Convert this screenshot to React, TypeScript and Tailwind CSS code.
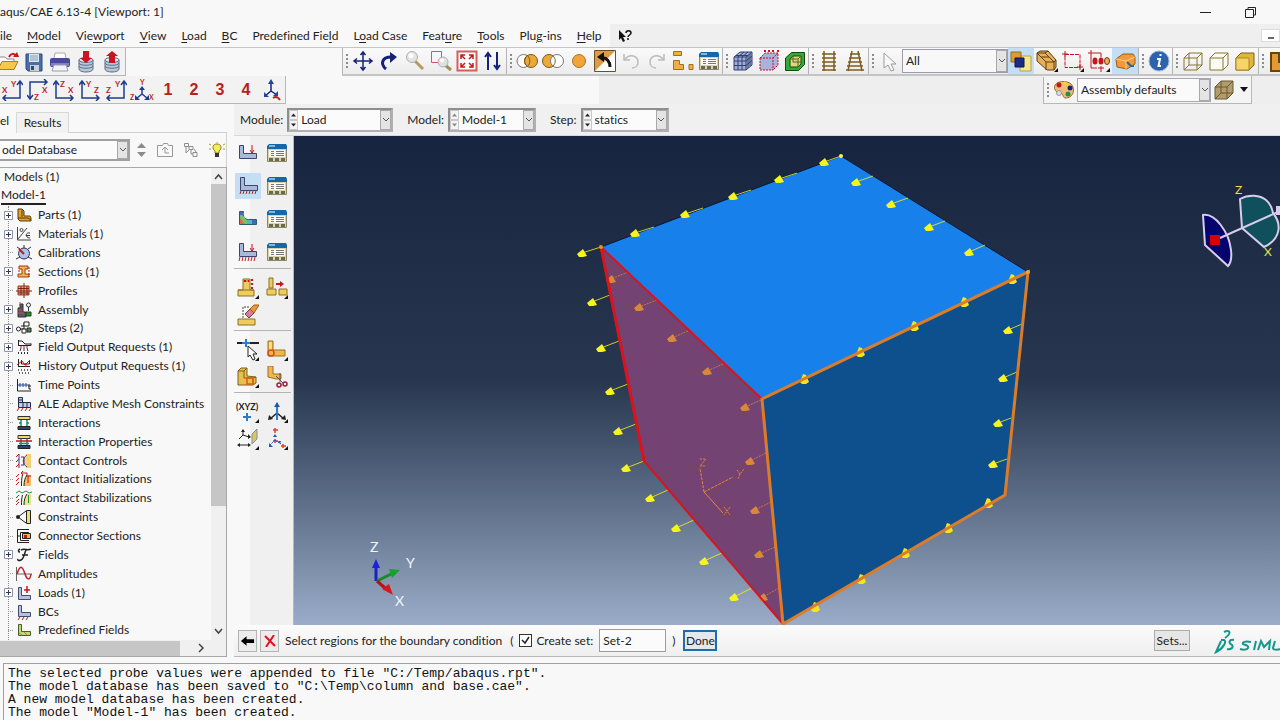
import React, { useState } from "react";

type IconMap = Record<string, React.ReactNode>;

const NAVY = "#14227a";
const RED = "#c4161c";

// every toolbar glyph lives on a 22x22 grid
const toolIcons: IconMap = {
    open: (
        <>
            <path d="M2 18V6h6l2 2h7v3" fill="#fff" stroke="#8a8a8a" />
            <path d="M1 18.500 5 10.500h16l-4 8z" fill="#f4c84c" stroke="#a8801c" />
            <path d="M12 6c2-4 5-4 7-1" fill="none" stroke={RED} strokeWidth="2" />
            <path d="M16 6h6l-2-5z" fill={RED} />
        </>
    ),
    save: (
        <>
            <path d="M3 3h16v17H5l-2-2z" fill="#4a6fa8" stroke="#2c4a7c" />
            <path d="M6 3h10v8H6z" fill="#dce6ee" />
            <path d="M7 5h8M7 7h8M7 9h8" stroke="#8ba0b4" />
            <path d="M7 14h9v6H7z" fill="#c8d0d8" />
            <path d="M8 15h3v4H8z" fill="#2c4a7c" />
        </>
    ),
    print: (
        <>
            <path d="M6 2h10l1 6H5z" fill="#fff" stroke="#aaa" />
            <rect x="1" y="7" width="20" height="9" rx="2" fill="#4a4a9c" />
            <path d="M2 12h18v3H2z" fill="#7f80c0" />
            <path d="M5 14h12l2 6H3z" fill="#f4f4f8" stroke="#9a9ab0" />
        </>
    ),
    dbIn: (
        <>
            <path d="M4 9v9c0 4 14 4 14 0V9" fill="#b8c8d8" stroke="#5a7088" />
            <ellipse cx="11" cy="9" rx="7" ry="2.500" fill="#dfe8f0" stroke="#5a7088" />
            <path d="M4 12c0 3 14 3 14 0M4 15c0 3 14 3 14 0" fill="none" stroke="#5a7088" />
            <path d="M8 0h6v7h3l-6 5-6-5h3z" fill="#cc1420" />
        </>
    ),
    dbOut: (
        <>
            <path d="M4 9v9c0 4 14 4 14 0V9" fill="#b8c8d8" stroke="#5a7088" />
            <ellipse cx="11" cy="9" rx="7" ry="2.500" fill="#dfe8f0" stroke="#5a7088" />
            <path d="M4 12c0 3 14 3 14 0M4 15c0 3 14 3 14 0" fill="none" stroke="#5a7088" />
            <path d="M8 12h6V5h3l-6-5-6 5h3z" fill="#cc1420" />
        </>
    ),
    pan: (
        <path
            d="M11 2v18M2 11h18M8.500 5 11 2l2.500 3M8.500 17l2.500 3 2.500-3M5 8.500 2 11l3 2.500M17 8.500l3 2.500-3 2.500"
            fill="none"
            stroke={NAVY}
            strokeWidth="1.500"
        />
    ),
    rotate: (
        <>
            <path d="M8 19C2 14 4 7 13 7" fill="none" stroke={NAVY} strokeWidth="3" />
            <path d="M12 2l7 5-7 6z" fill={NAVY} />
        </>
    ),
    magnify: (
        <>
            <path d="M11 11l8 8" stroke="#b49a5c" strokeWidth="3" />
            <circle cx="8" cy="7" r="5.500" fill="#e4e4e4" stroke="#b0b0b0" />
            <circle cx="7" cy="5.500" r="2.500" fill="#fff" />
        </>
    ),
    boxZoom: (
        <>
            <path d="M1.500 1.500h10v11h-10z" fill="none" stroke="#cc5a5a" />
            <path d="M15 15l6 5" stroke="#a58d55" strokeWidth="3" />
            <circle cx="13" cy="12" r="5" fill="#e0e0e0" stroke="#b0b0b0" />
            <circle cx="12" cy="10.500" r="2" fill="#fff" />
        </>
    ),
    fit: (
        <>
            <path d="M1.500 1.500h19v19h-19z" fill="#fff" stroke="#d06058" strokeWidth="2" />
            <path
                d="M9 9 5 5m0 4V5h4M13 9l4-4m-4 0h4v4M9 13l-4 4m0-4v4h4M13 13l4 4m0-4v4h-4"
                fill="none"
                stroke={RED}
                strokeWidth="1.500"
            />
        </>
    ),
    cycle: (
        <path d="M6 20V4M3 7l3-4 3 4M15 2v16M12 15l3 4 3-4" fill="none" stroke={NAVY} strokeWidth="2" />
    ),
    union: (
        <>
            <circle cx="7.500" cy="11" r="6.500" fill="#fff" stroke="#777" />
            <circle cx="15" cy="11" r="6.500" fill="#eda83a" stroke="#7a5818" />
            <path d="M11.500 5.500c-4 3-4 8 0 11" fill="none" stroke="#7a5818" />
            <path d="M11.500 5.500c3 3 3 8 0 11" fill="none" stroke="#7a5818" />
        </>
    ),
    subtract: (
        <>
            <circle cx="7" cy="11" r="6.500" fill="#eda83a" stroke="#7a5818" />
            <circle cx="15" cy="11" r="6.500" fill="#fff" stroke="#777" />
            <path d="M11 6c3 3 3 7 0 10" fill="none" stroke="#7a5818" />
        </>
    ),
    circle: <circle cx="11" cy="11" r="6.500" fill="#f0a53a" stroke="#a87424" />,
    pickBack: (
        <>
            <path d="M.500.500h21v21H.500z" fill="#fff" stroke="#6a5024" />
            <path d="M1 1h20L1 21z" fill="#de9a44" />
            <path d="M7 8c6-1 9 4 9 9" fill="none" stroke="#111" strokeWidth="3" />
            <path d="M3 7l7-5v10z" fill="#111" />
        </>
    ),
    undo: (
        <path d="M4 4v6h6M5 9c5-6 13-3 13 3 0 3-2 6-6 6" fill="none" stroke="#bcbcbc" strokeWidth="1.500" />
    ),
    redo: (
        <path d="M18 4v6h-6M17 9C12 3 4 6 4 12c0 3 2 6 6 6" fill="none" stroke="#bcbcbc" strokeWidth="1.500" />
    ),
    replace: (
        <path
            d="M1.500 1.500h8v4h-8zM1.500 10.500h6v4h4v5h-10zM17 14.500h4v5h-4z"
            fill="#eeb040"
            stroke="#a07020"
        />
    ),
    manager: (
        <>
            <path d="M1.500 4.500h19v15h-19z" fill="#d8d4a8" stroke="#8a8666" />
            <path d="M1 5V4l2-2h17l1 2v3H1z" fill="#1467a8" />
            <path d="M3 4h6" stroke="#fff" strokeWidth="1" />
            <path d="M3 8h16v7H3z" fill="#fbfbf4" />
            <path d="M5 9.500h3M5 11.500h3M5 13.500h3M10 9.500h8M10 11.500h8M10 13.500h8" stroke="#77777c" />
            <path d="M3 16h4v3H3zM9 16h4v3H9zM15 16h4v3h-4z" fill="#6a6a50" />
        </>
    ),
    mesh: (
        <>
            <path d="M2 7l6-5h12v13l-6 5H2z" fill="#9cadd8" stroke="#33416c" />
            <path
                d="M2 7h12v13M14 7l6-5M6 7v13M10 7v13M2 11h12l6-5M2 15.500h12l6-5M6 7l6-5M10 7l6-5M16 5v13M18 4v12M4 5.500h12"
                fill="none"
                stroke="#33416c"
            />
        </>
    ),
    seed: (
        <>
            <path d="M2 8l5-5h13v12l-5 5H2z" fill="#a8b2dc" />
            <path d="M2 8h13v12H2zM2 8l5-5h13v12l-5 5M15 8l5-5" fill="none" stroke={RED} strokeDasharray="2 1" />
            <path d="M7 2V0M11 2V0M15 2V0M20 2V0" stroke={RED} strokeWidth="2" />
        </>
    ),
    shell: (
        <>
            <path d="M1.500 8l6-5.500h13v12l-6 6h-13z" fill="#35a836" stroke="#134a14" />
            <path d="M6 9l3-3h8v8l-3 3H6z" fill="#dcd67c" stroke="#134a14" />
            <path d="M6 9h8v8M14 9l3-3M9 6v6M9 12h8" fill="none" stroke="#5c6420" />
        </>
    ),
    ladder: (
        <path d="M6 1v20M16 1v20M4 4h14M4 8h14M4 12h14M4 16h14M4 20h14" stroke="#7d5e22" strokeWidth="1.500" />
    ),
    ladderPersp: (
        <path d="M8 1 4 21M14 1l4 20M6 4h10M5 8h12M4 12h14M3 16h16M2 20h18" stroke="#7d5e22" strokeWidth="1.500" />
    ),
    cursor: <path d="M6 3v15l4-3 3 6 3-1-3-6h5z" fill="#f8f8f8" stroke="#9a9a9a" />,
    layers: (
        <>
            <path d="M10 6h11v15H10z" fill="#f6e68c" stroke="#b8a24c" />
            <path d="M1 2h10v10H1z" fill="#dc9c30" stroke="#9c6a14" />
            <path d="M5 8h9v9H5z" fill="#1c2c84" stroke="#0c1450" />
        </>
    ),
    stack: (
        <>
            <path d="M1 3l3-2h8l8 9v7l-2 3h-7L1 11z" fill="#e9ae58" stroke="#5a4014" />
            <path d="M1 3h8l9 9v8M9 3l3-2M18 12l2-2M10 12h8M10 12v8M1 3l9 9M5 7h8" fill="none" stroke="#5a4014" />
            <path d="M22 18v4h-4z" fill="#111" />
        </>
    ),
    dragBox: (
        <>
            <path d="M3 4.500h15v13H3z" fill="none" stroke={RED} strokeDasharray="4 1" />
            <path d="M0 4h6M3 1v6M15 17h6M18 14v6" stroke={RED} />
            <path d="M22 18v4h-4z" fill="#111" />
        </>
    ),
    dragPick: (
        <>
            <path d="M0 3h6M3 0v6M6 3h7M13 3v4M3 6v12h6M13 16v6M10 18h6" fill="none" stroke={RED} />
            <ellipse cx="7" cy="11" rx="2.500" ry="3.500" fill={RED} />
            <ellipse cx="13" cy="11" rx="2.500" ry="3.500" fill={RED} />
            <ellipse cx="19" cy="11" rx="2.500" ry="3.500" fill="#e8b050" stroke="#7a3010" />
            <path d="M22 18v4h-4z" fill="#111" />
        </>
    ),
    solidPick: (
        <>
            <path d="M2 9l7-5h10l2 3v7l-8 5-10-2z" fill="#f29a38" stroke="#a35a10" />
            <path d="M2 9l10 2 9-4M12 11v8" fill="none" stroke="#fbd294" />
            <path d="M13 12l4 4h3" fill="none" stroke="#2c64a0" strokeWidth="2" />
        </>
    ),
    info: (
        <>
            <circle cx="11" cy="11" r="10" fill="#2e62ab" stroke="#9ab4d8" />
            <path d="M11.500 5h2M9 9h3l-1.500 7H13" fill="none" stroke="#fff" strokeWidth="2" />
        </>
    ),
    wire: (
        <path
            d="M2 8h13v12H2zM7 3h13v12H7zM2 8l5-5M15 8l5-5M15 20l5-5M2 20l5-5"
            fill="none"
            stroke="#8c7428"
        />
    ),
    hidden: <path d="M2 8h13v12H2zM2 8l5-5h13v12l-5 5M15 8l5-5" fill="#fbfbf6" stroke="#8c7428" />,
    shaded: (
        <>
            <path d="M2 8l5-5h13v12l-5 5H2z" fill="#e0b63c" stroke="#7c6014" />
            <path d="M2 8h13v12H2z" fill="#f6d466" stroke="#a8862a" />
        </>
    ),
    cutBlock: <path d="M3 3h8v9h11v9H3z" fill="#e39a34" stroke="#6a420c" strokeWidth="2" />,
    palette: (
        <>
            <path d="M2 6C5 1 18 1 20 8c2 6-2 11-7 11-4 0-2-4-5-5-4 0-8-3-6-8z" fill="#edbc7c" stroke="#9a6c34" />
            <circle cx="6" cy="6" r="2.500" fill={RED} />
            <circle cx="12" cy="4.500" r="2" fill="#f4d820" />
            <circle cx="17" cy="9" r="2.500" fill="#1c2468" />
            <circle cx="15" cy="15" r="2.500" fill="#28903c" />
            <circle cx="6" cy="14" r="2.500" fill="#ddd" stroke="#999" />
        </>
    ),
    cube: (
        <>
            <path d="M2 8l6-6h12v12l-6 6H2z" fill="#b09c6c" stroke="#6a5a2c" />
            <path d="M2 8h12v12M14 8l6-6M8 2v12h12M2 20l6-6" fill="none" stroke="#6a5a2c" />
        </>
    ),
    triad: (
        <>
            <path d="M10 2v10l-6 5M10 12l6 4" fill="none" stroke={NAVY} strokeWidth="1.500" />
            <path d="M7 5l3-5 3 5zM3 13v5h5zM17 12v5h-5z" fill="#1c48a0" />
            <path d="M12 19c3-2 5-1 7 2" fill="none" stroke={RED} strokeWidth="2" />
        </>
    ),
    load: (
        <>
            <path d="M2.500 3.500h4v8h13v5h-17z" fill="#aab8dc" stroke="#3c4668" />
            <path d="M15 3v8M13 8l2 3 2-3" fill="none" stroke={RED} />
        </>
    ),
    bc: (
        <>
            <path d="M3.500 2.500h4v8h13v5h-17z" fill="#aab8dc" stroke="#3c4668" />
            <path d="M4 16l-1 3M7 16l-1 3M10 16l-1 3M13 16l-1 3M16 16l-1 3M19 16l-1 3" stroke={RED} />
        </>
    ),
    predef: (
        <>
            <path d="M2.500 3.500h4c-1 5 1 8 5 8h8v5h-17z" fill="#4bb8c4" stroke="#305a70" />
            <path d="M3 4h3v3H3z" fill="#5864c0" />
            <path d="M3 8h3l4 5v3H5z" fill="#74c860" />
            <path d="M3 10l5 6H3z" fill="#e0684c" />
            <path d="M15 12h4v4h-4z" fill="#4068bc" />
        </>
    ),
    loadCase: (
        <>
            <path d="M2.500 2.500h4v8h13v5h-17z" fill="#aab8dc" stroke="#3c4668" />
            <path d="M15 3v7M13 7l2 3 2-3" fill="none" stroke={RED} />
            <path d="M3 16l-1 4M6 16l-1 4M9 16l-1 4M12 16l-1 4M15 16l-1 4M18 16l-1 4" stroke={RED} />
        </>
    ),
    partition: (
        <>
            <path d="M6 2h7v11h4v6H1v-6h5z" fill="#f0cc5c" stroke="#8c7020" />
            <path d="M1 13h16M6 4h7" stroke="#8c7020" />
            <path d="M7 4h5M15 2v10" stroke={RED} strokeDasharray="2 2" strokeWidth="2" />
            <path d="M22 18v4h-4z" fill="#111" />
        </>
    ),
    splitBlock: (
        <>
            <path d="M3 1h4v10H3zM1 12h9v6H1zM13 12h8v6h-8z" fill="#f0cc5c" stroke="#8c7020" />
            <path d="M10 7h6" stroke={RED} strokeWidth="2" />
            <path d="M14 4l4 3-4 3z" fill={RED} />
            <path d="M22 18v4h-4z" fill="#111" />
        </>
    ),
    eraser: (
        <>
            <path d="M1 15h17v6H1z" fill="#f0cc5c" stroke="#8c7020" />
            <path d="M6 14V3h7" fill="none" stroke="#444" strokeDasharray="2 1" />
            <path d="M8 10l5-5 4 4-5 5z" fill="#d87c9c" stroke="#7c3c50" />
            <path d="M13 5l4-4h5l-5 8z" fill="#e89838" stroke="#a36014" />
        </>
    ),
    datum: (
        <>
            <path d="M0 4h6M13 4h9" stroke="#222" strokeWidth="2" />
            <path d="M9 0v8M5 4h8" stroke="#2a7cd0" strokeWidth="2" />
            <path d="M11 7v11l2-2 3 5 2-1-2-5h4z" fill="#fff" stroke="#222" />
            <path d="M22 18v4h-4z" fill="#111" />
        </>
    ),
    featCurve: (
        <>
            <path d="M2 2h5v9h12v6H2z" fill="#f0b84c" stroke="#9c7020" />
            <path d="M3 3h3v8H3z" fill="#f4e084" />
            <circle cx="5" cy="14" r="3" fill="none" stroke="#d84c1c" strokeWidth="1.500" />
            <path d="M22 18v4h-4z" fill="#111" />
        </>
    ),
    featSolid: (
        <>
            <path d="M1 5l3-3h6v8l9 1v6l-3 2H1z" fill="#eac04c" stroke="#7c601c" />
            <path d="M1 5h6v7h9v7M7 5l3-3M16 12l3-1" fill="none" stroke="#7c601c" />
            <path d="M10 12h6v6h-6z" fill="none" stroke="#e05c14" strokeWidth="1.500" />
            <path d="M22 18v4h-4z" fill="#111" />
        </>
    ),
    scissors: (
        <>
            <path d="M2 0h5v8h8v5h-5L2 11z" fill="#f0b84c" stroke="#9c7020" />
            <path d="M10 10l7 7M14 7l0 9" stroke="#555" />
            <circle cx="13" cy="19" r="2" fill="none" stroke="#a01c3c" strokeWidth="1.500" />
            <circle cx="19" cy="18" r="2" fill="none" stroke="#a01c3c" strokeWidth="1.500" />
        </>
    ),
    axes: (
        <>
            <path d="M11 12l-7 6M11 12l7 6" stroke="#222" strokeWidth="1.500" />
            <path d="M11 19V2" stroke="#2a7cd0" strokeWidth="2" />
            <path d="M8 6l3-5 3 5z" fill="#1c5ca8" />
            <path d="M2 19l1-5 4 4zM20 19l-1-5-4 4z" fill="#222" />
            <path d="M22 18v4h-4z" fill="#111" />
        </>
    ),
    datumPlane: (
        <>
            <path d="M6 2v5l-4 4M6 7l6 2M2 17h10" fill="none" stroke="#222" />
            <path d="M4 4l2-3 2 3zM11 6v5l3-2zM3 15v4l-3-2zM11 15v4l3-2z" fill="#222" />
            <path d="M15 6l5-5v10l-5 5z" fill="#e8c058" stroke="#6c98b8" />
            <path d="M22 18v4h-4z" fill="#111" />
        </>
    ),
    csys: (
        <>
            <path d="M9 0v5M7 2h5M9 11v4M7 13h5M15 18h5M17 16v4" stroke="#e03c3c" strokeWidth="1.500" />
            <path d="M7 9l2-3 2 3zM3 15v4h4zM15 13l-3 0 2 3z" fill="#1c5cb8" />
            <path d="M9 12l-5 5M9 12l6 4" stroke="#1c5cb8" strokeDasharray="2 1" />
            <path d="M22 18v4h-4z" fill="#111" />
        </>
    ),
};

const treeIcons: IconMap = {
    part: <path d="M2 2h4l2 2v5h6l1 2v3H4l-2-2zM2 11h10l3 2M6 3v7" fill="#e0a030" stroke="#5a3c08" />,
    material: (
        <>
            <path d="M1.500 1v13H15M2 13 11 2" fill="none" stroke="#444" />
            <circle cx="5.500" cy="4" r="1.500" fill="none" stroke="#444" />
            <path d="M14 7c-5-1-5 5 0 5M10 9.500h4" fill="none" stroke="#333" />
        </>
    ),
    calibration: (
        <>
            <path d="M8 0v3M1 2l3 2M15 2l-3 2M0 14l4-2M16 14l-4-2" stroke="#333" />
            <circle cx="8" cy="8.500" r="5.500" fill="#b4c0e8" stroke="#2c3458" />
            <path d="M3 4l5 5" stroke={RED} strokeWidth="2" />
        </>
    ),
    section: (
        <>
            <path d="M3 2h9v3H9v5h4v3H2v-3h4V5H3z" fill="#ecb84c" stroke="#a03c14" />
            <path d="M13 3v10M2 7h3" stroke={RED} strokeDasharray="2 1" />
        </>
    ),
    profile: (
        <>
            <path d="M2 3h11v9H2z" fill="#f2a884" stroke="#9c3c1c" />
            <path d="M8 0v15M0 8h16M2 5.500h11M2 10h11M5 3v9M11 3v9" stroke="#7a2414" />
        </>
    ),
    assembly: (
        <>
            <path d="M2 6h2V2h3v8h3v5H2z" fill="#585868" stroke="#333" />
            <circle cx="12.500" cy="3" r="2" fill="#fff" stroke="#333" />
            <path d="M12.500 5v4" stroke="#333" />
            <path d="M10 10h5v4h-5z" fill="#2c8434" stroke="#14441a" />
            <path d="M4 0v4M2 8h4M2 11h6" stroke="#c05050" />
        </>
    ),
    step: (
        <>
            <circle cx="2.500" cy="9" r="2" fill="#fff" stroke="#222" />
            <path d="M4 9h4V3M5 6h3" fill="none" stroke="#222" />
            <path d="M8 2h5v4H8zM6 9h4v4H6z" fill="#fff" stroke="#222" />
            <path d="M11 8h4v4h-4z" fill="#4a8c4c" stroke="#222" />
        </>
    ),
    fieldOut: (
        <>
            <path d="M2.500 1v6M2 2h4l3 3h6M2 6.500h13v-2" fill="none" stroke="#222" />
            <path d="M5 9l-1 3M8 9v3M11 9l1 3" stroke="#333" />
            <path d="M2 14h12" stroke="#333" strokeDasharray="1 2" strokeWidth="2" />
            <path d="M4 8h9" stroke={RED} strokeDasharray="2 1" />
        </>
    ),
    histOut: (
        <>
            <path d="M2.500 1v8M2 8.500h12M5.500 2v4h8V2" fill="none" stroke="#222" />
            <path d="M1 7l5-4 3 4 5-5M10 5v4" fill="none" stroke={RED} />
            <path d="M2 12h13M3 15h12" stroke="#333" strokeDasharray="1 2" strokeWidth="1.500" />
        </>
    ),
    time: (
        <>
            <path d="M1.500 2v12H15" fill="none" stroke="#222" />
            <path d="M2 8h10M4 6v4M7 6v4M10 6v4" stroke="#2848a0" />
            <path d="M13 7v5h2M12 9h3" fill="none" stroke="#222" />
        </>
    ),
    ale: (
        <>
            <path d="M2.500 1.500h4v5h8v5h-12zM2 6.500h5v5M2 4h5M11 6v5" fill="#c0ccec" stroke="#222a4c" />
            <path d="M3 12l-2 3M7 12l-2 3M11 12l-2 3M15 12l-2 3" stroke={RED} />
        </>
    ),
    interaction: (
        <>
            <path d="M2 1.500h12v3H2z" fill="#f0dc64" stroke="#333" />
            <path d="M2 11.500h12v3H2z" fill="#30426c" stroke="#222" />
            <path d="M5 5v6M11 5v6M3 8h2M11 8h2" stroke="#1c8c74" strokeWidth="1.500" />
        </>
    ),
    interProp: (
        <>
            <path d="M2 1.500h12v3H2z" fill="#f0dc64" stroke="#333" />
            <path d="M2 11.500h12v3H2z" fill="#30426c" stroke="#222" />
            <path d="M5 5v6M11 5v6M3 9.500h10" stroke="#1c8c74" strokeWidth="1.500" />
            <path d="M0 7h16" stroke={RED} strokeWidth="1.500" />
        </>
    ),
    contactCtl: (
        <>
            <path d="M10 1h5v14h-5z" fill="#f4d070" />
            <path d="M11 2c-5 3-5 9 0 12" fill="#f4d488" stroke="#444" />
            <path d="M3 1v14M5 4h3v8H5" fill="none" stroke="#4a2c94" />
            <path d="M0 4l3-3M0 9l3-3M0 14l3-3" stroke={RED} />
        </>
    ),
    contactInit: (
        <>
            <path d="M11 4h4v11H8c0-5 1-8 3-11z" fill="#f2c05c" />
            <path d="M6.500 4c-1 4-1 7-1 11M11 4c-2 3-3 6-3 11" fill="none" stroke="#222" />
            <path d="M0 6l3-3M0 10l3-3M0 14l3-3M5 2h6v4M7 0 5 2l2 2M15 5h-3v7" fill="none" stroke={RED} />
        </>
    ),
    contactStab: (
        <>
            <path d="M11 4h4v11H8c0-5 1-8 3-11z" fill="#f2e08c" />
            <path d="M6.500 5c-1 4-1 6-1 10M11 4c-2 3-3 6-3 11" fill="none" stroke="#222" />
            <path d="M0 3l3-2 3 2 4-2 3 2 3-1M12.500 5v8" fill="none" stroke="#1c9440" />
            <path d="M0 8l3-3M0 12l3-3M0 15l3-3" stroke={RED} />
        </>
    ),
    constraint: (
        <>
            <path d="M10.500 1.500h4v13h-4z" fill="#f2dc74" stroke="#222" />
            <path d="M10 2 2 8l8 6" fill="none" stroke="#222" />
            <circle cx="2" cy="8" r="2" fill="#222" />
        </>
    ),
    connector: (
        <>
            <path d="M13 1.500H1.500v13H13M13 4.500H4.500v8H13" fill="none" stroke="#222" />
            <path d="M1 8h3" stroke="#222" />
            <path d="M6.500 5.500h8v5h-8z" fill="#ecb848" stroke="#222" />
            <path d="M8 7h3v3H8z" fill={RED} />
        </>
    ),
    field: (
        <path
            d="M5 3c4-2 6 1 10-1M10 3C8 7 8 12 5 13c-2 1-4 0-3-1M6 8h6M4 2C2 3 2 5 4 5"
            fill="none"
            stroke="#222"
            strokeWidth="1.500"
        />
    ),
    amplitude: (
        <>
            <path d="M.500 1v14M0 8h16" stroke="#666" />
            <path d="M1 8c3-9 5-9 8 0 2 6 5 7 6 0" fill="none" stroke="#b8202c" strokeWidth="1.500" />
        </>
    ),
    load: (
        <>
            <path d="M2.500 2.500h3v8h9v4h-12z" fill="#b4c0e0" stroke="#444c68" />
            <path d="M11 1v7M8 5h6" stroke={RED} strokeWidth="1.500" />
        </>
    ),
    bc: (
        <>
            <path d="M2.500 1.500h3v7h9v4h-12z" fill="#b4c0e0" stroke="#444c68" />
            <path d="M4 13l-2 3M8 13l-2 3M12 13l-2 3" stroke={RED} />
        </>
    ),
    predef: (
        <>
            <path d="M2.500 2.500h3v7h9v4h-12z" fill="#b8dc74" stroke="#4c5c2c" />
            <path d="M3 11l3 2M8 10l3 3" stroke="#e07040" />
        </>
    ),
};

const treeRows = [
    { icon: "part", label: "Parts (1)", plus: true },
    { icon: "material", label: "Materials (1)", plus: true },
    { icon: "calibration", label: "Calibrations" },
    { icon: "section", label: "Sections (1)", plus: true },
    { icon: "profile", label: "Profiles" },
    { icon: "assembly", label: "Assembly", plus: true },
    { icon: "step", label: "Steps (2)", plus: true },
    { icon: "fieldOut", label: "Field Output Requests (1)", plus: true },
    { icon: "histOut", label: "History Output Requests (1)", plus: true },
    { icon: "time", label: "Time Points" },
    { icon: "ale", label: "ALE Adaptive Mesh Constraints" },
    { icon: "interaction", label: "Interactions" },
    { icon: "interProp", label: "Interaction Properties" },
    { icon: "contactCtl", label: "Contact Controls" },
    { icon: "contactInit", label: "Contact Initializations" },
    { icon: "contactStab", label: "Contact Stabilizations" },
    { icon: "constraint", label: "Constraints" },
    { icon: "connector", label: "Connector Sections" },
    { icon: "field", label: "Fields", plus: true },
    { icon: "amplitude", label: "Amplitudes" },
    { icon: "load", label: "Loads (1)", plus: true },
    { icon: "bc", label: "BCs" },
    { icon: "predef", label: "Predefined Fields" },
];

// label split as [before, mnemonic, after]
const menus = [
    ["", "M", "odel"],
    ["Vie", "w", "port"],
    ["", "V", "iew"],
    ["", "L", "oad"],
    ["", "B", "C"],
    ["Predefined Fie", "l", "d"],
    ["L", "o", "ad Case"],
    ["Feat", "u", "re"],
    ["", "T", "ools"],
    ["Plu", "g", "-ins"],
    ["", "H", "elp"],
];

const messages = [
    'The selected probe values were appended to file "C:/Temp/abaqus.rpt".',
    'The model database has been saved to "C:\\Temp\\column and base.cae".',
    "A new model database has been created.",
    'The model "Model-1" has been created.',
];

function Tool({ name, active }: { name: string; active?: boolean }) {
    return (
        <button
            aria-label={name}
            className={`flex h-[26px] w-[26px] shrink-0 items-center justify-center ${active ? "bg-[#c3def5]" : ""}`}
        >
            <svg viewBox="0 0 22 22" className="h-[22px] w-[22px]">
                {toolIcons[name]}
            </svg>
        </button>
    );
}

function Group({ children }: { children: React.ReactNode }) {
    return (
        <div className="flex shrink-0 items-center border-l border-[#b4b4b4]">
            <svg className="h-4 w-[7px] shrink-0" viewBox="0 0 7 16">
                <path d="M4 1v15" stroke="#8c8c8c" strokeWidth="2" strokeDasharray="2 2" />
            </svg>
            {children}
        </div>
    );
}

function Chevron() {
    return (
        <span className="pointer-events-none flex w-[11px] shrink-0 items-center justify-center self-stretch border border-[#a8a8a8] bg-[#e4e4e4]">
            <svg viewBox="0 0 8 6" className="h-[6px] w-2">
                <path d="M1 1l3 3 3-3" fill="none" stroke="#555" />
            </svg>
        </span>
    );
}

function Spinner({ dim }: { dim?: boolean }) {
    return (
        <svg viewBox="0 0 9 20" className="h-5 w-[9px] shrink-0">
            <path d="M.500.500h8v9h-8zM.500 10.500h8v9h-8z" fill="#f4f4f4" stroke="#c8c8c8" />
            <path d="M2 6.500 4.500 3.500 7 6.500zM2 13.500h5l-2.500 3z" fill={dim ? "#888" : "#222"} />
        </svg>
    );
}

function Combo({ label, value, className, dim }: { label: string; value: string; className: string; dim?: boolean }) {
    return (
        <label className="flex items-center gap-1">
            {label}
            <span className={`flex h-6 items-center border-2 border-[#8e8e8e] border-r-[#b0b0b0] border-b-[#b0b0b0] bg-[#fbfbfb] ${className}`}>
                <Spinner dim={dim} />
                <select className="min-w-0 flex-1 appearance-none bg-transparent pl-[3px] outline-none">
                    <option>{value}</option>
                </select>
                <Chevron />
            </span>
        </label>
    );
}

function ViewIcon({ kind }: { kind: number }) {
    // corner letters of the standard view buttons
    const views = [
        { path: "M2 19h17V3M5 16l-3 3 3 3M16 6l3-4 3 4", a: ["X", 1, 14], b: ["Y", 10, 8] },
        { path: "M20 3H3v16M17 0l3 3-3 3M0 16l3 4 3-4", a: ["X", 15, 14], b: ["Z", 7, 21] },
        { path: "M3 3v16h17M0 6l3-4 3 4M17 16l3 3-3 3", a: ["Z", 7, 8], b: ["X", 15, 14] },
        { path: "M3 3v16h17M0 6l3-4 3 4M17 16l3 3-3 3", a: ["Y", 7, 8], b: ["Z", 15, 14] },
        { path: "M2 19h17V3M5 16l-3 3 3 3M16 6l3-4 3 4", a: ["Z", 1, 14], b: ["Y", 10, 8] },
    ];
    const v = views[kind];
    return (
        <button aria-label={`view ${kind + 1}`} className="flex h-[26px] w-[26px] shrink-0 items-center justify-center">
            <svg viewBox="0 0 22 22" className="h-[22px] w-[22px]">
                <path d={v.path} fill="none" stroke="#1c3c90" strokeWidth="1.500" />
                <g fill="#b8281c" fontSize="8" fontWeight="700">
                    <text x={v.a[1]} y={v.a[2]}>{v.a[0]}</text>
                    <text x={v.b[1]} y={v.b[2]}>{v.b[0]}</text>
                </g>
            </svg>
        </button>
    );
}

function Toolbars() {
    return (
        <>
            <div className="flex h-[29px] shrink-0 overflow-hidden border-t border-[#c4c4c4]">
                <div className="flex w-[126px] shrink-0 items-center justify-end overflow-hidden border-r border-b border-[#b4b4b4] bg-[#f2f2f2]">
                    <Tool name="open" />
                    <Tool name="save" />
                    <Tool name="print" />
                    <Tool name="dbIn" />
                    <Tool name="dbOut" />
                </div>
                <div className="ml-auto flex shrink-0 border-b-2 border-[#c4c4c4] bg-gradient-to-b from-[#fafafa] to-[#ececec]">
                    <Group>
                        {["pan", "rotate", "magnify", "boxZoom", "fit", "cycle"].map((n) => <Tool key={n} name={n} />)}
                    </Group>
                    <Group>
                        {["union", "subtract", "circle", "pickBack", "undo", "redo", "replace", "manager"].map((n) => (
                            <Tool key={n} name={n} />
                        ))}
                    </Group>
                    <Group>
                        {["mesh", "seed", "shell"].map((n) => <Tool key={n} name={n} />)}
                    </Group>
                    <Group>
                        <Tool name="ladder" />
                        <Tool name="ladderPersp" />
                    </Group>
                    <Group>
                        <Tool name="cursor" />
                        <span className="flex h-6 w-[106px] items-center border border-[#9c9cac] bg-[#f8f8f8]">
                            <select aria-label="Selection filter" className="min-w-0 flex-1 appearance-none pl-[3px] outline-none">
                                <option>All</option>
                            </select>
                            <Chevron />
                        </span>
                        <Tool name="layers" active />
                        <Tool name="stack" />
                        <Tool name="dragBox" />
                        <Tool name="dragPick" />
                        <Tool name="solidPick" active />
                    </Group>
                    <Group>
                        <Tool name="info" />
                    </Group>
                    <Group>
                        {["wire", "hidden", "shaded"].map((n) => <Tool key={n} name={n} />)}
                    </Group>
                    <Group>
                        <div className="w-[14px] overflow-hidden">
                            <Tool name="cutBlock" />
                        </div>
                    </Group>
                </div>
            </div>
            <div className="flex h-7 shrink-0 bg-linear-to-r from-[#f8f8f8] from-[599px] to-[#eeeeee] to-[599px]">
                <div className="-ml-px flex shrink-0 items-center border-r border-b border-[#b8b8b8] bg-[#f2f2f2]">
                    {[0, 1, 2, 3, 4].map((k) => <ViewIcon key={k} kind={k} />)}
                    <button aria-label="iso view" className="flex h-[26px] w-[26px] items-center justify-center">
                        <svg viewBox="0 0 24 24" className="h-6 w-6">
                            <path d="M12 10v6l-5 4M12 16l5 4" fill="none" stroke="#1c3c90" strokeWidth="1.500" />
                            <path d="M9 12l3-4 3 4zM5 17v5h5zM19 17v5h-5z" fill="#1c3c90" />
                            <g fill="#b8281c" fontSize="7" fontWeight="700">
                                <text x="10" y="7">Y</text>
                                <text x="0" y="22">Z</text>
                                <text x="19" y="22">X</text>
                            </g>
                        </svg>
                    </button>
                    {["1", "2", "3", "4"].map((n) => (
                        <button key={n} className="h-[26px] w-[26px] font-['Liberation_Sans'] text-base font-bold text-[#b8201c]">
                            {n}
                        </button>
                    ))}
                    <Tool name="triad" />
                </div>
                <div className="mr-7 ml-auto flex items-center border-r border-b border-[#b8b8b8] bg-[#f4f4f4]">
                    <Group>
                        <Tool name="palette" />
                        <span className="flex h-6 w-[134px] items-center border border-[#a8a8b4] bg-[#fafafa]">
                            <select aria-label="Color mapping" className="min-w-0 flex-1 appearance-none pl-[3px] outline-none">
                                <option>Assembly defaults</option>
                            </select>
                            <Chevron />
                        </span>
                        <Tool name="cube" />
                        <svg viewBox="0 0 14 6" className="h-[6px] w-[14px]">
                            <path d="M3 0h8L7 5z" fill="#111" />
                        </svg>
                    </Group>
                </div>
            </div>
        </>
    );
}

function ModelTree() {
    return (
        <aside className="flex w-[227px] shrink-0 flex-col">
            <div className="flex h-[29px] items-end">
                <button className="flex h-[25px] w-4 pt-[5px]">el</button>
                <button className="h-[21px] w-[53px] border border-b-0 border-[#d8d8d8] bg-[#f2f2f2]">Results</button>
                <div className="flex-1 self-end border-b border-[#d0d0d0]" />
            </div>
            <div className="flex h-[34px] shrink-0 items-center border-r border-[#d0d0d0]">
                <label className="flex h-[22px] w-[130px] items-center border-2 border-l-0 border-[#a0a0a0] bg-[#fbfbfb]">
                    <select aria-label="Tree root" className="min-w-0 flex-1 appearance-none pl-[2px] outline-none">
                        <option>odel Database</option>
                    </select>
                    <Chevron />
                </label>
                <div className="flex flex-1 items-center justify-between pr-px pl-[6px]">
                    <svg viewBox="0 0 11 16" className="h-4 w-[11px]">
                        <path d="M1 6l4.500-5L10 6zM1 10h9l-4.500 5z" fill="#8c8c8c" />
                    </svg>
                    <svg viewBox="0 0 16 16" className="h-4 w-4">
                        <path d="M.500 14.500v-11h5l1-2h4l1 2h4v11zM5 8l3-3 3 3M8 5v6h4" fill="none" stroke="#999" />
                    </svg>
                    <svg viewBox="0 0 16 16" className="h-4 w-4">
                        <path d="M1.500 1.500h4v3h-4zM6 4.500h4v3H6zM10 10.500h4v4h-4zM3 5v6l3-3M8 8v4h2M11 7l2 3" fill="none" stroke="#8c8c8c" />
                    </svg>
                    <svg viewBox="0 0 16 16" className="h-4 w-4">
                        <path d="M8 2c-5 0-5 5-2 7v2h4V9c3-2 3-7-2-7z" fill="#f4ec58" stroke="#8c8020" />
                        <path d="M6 12h4M6 14h4" stroke="#333" strokeWidth="2" />
                        <path d="M0 2l2 1M0 7h2M16 2l-2 1M16 7h-2M8 0v1" stroke="#b09c20" />
                    </svg>
                </div>
            </div>
            <div className="flex min-h-0 flex-1 border-t border-r border-[#a8a8a8]">
                <div className="relative flex min-w-0 flex-1 flex-col">
                    <div className="absolute top-[38px] bottom-0 left-2 w-px border-l border-dotted border-[#888]" />
                    <div className="flex min-h-0 flex-1 items-center pl-1">Models (1)</div>
                    <div className="flex min-h-0 flex-1 items-center pl-px">
                        <span className="border-b-2 border-[#222] leading-4">Model-1</span>
                    </div>
                    {treeRows.map((row) => (
                        <div key={row.label} className="relative flex min-h-0 flex-1 items-center pl-1 whitespace-nowrap">
                            <svg viewBox="0 0 9 9" className="h-[9px] w-[9px] shrink-0">
                                {row.plus ? (
                                    <>
                                        <path d="M.500.500h8v8h-8z" fill="#fff" stroke="#9094a4" />
                                        <path d="M2 4.500h5M4.500 2v5" stroke="#333858" />
                                    </>
                                ) : (
                                    <path d="M4 4.500h5" stroke="#999" strokeDasharray="1 1" />
                                )}
                            </svg>
                            <svg viewBox="0 0 16 16" className="mr-[6px] ml-[3px] h-4 w-4 shrink-0">
                                {treeIcons[row.icon]}
                            </svg>
                            {row.label}
                        </div>
                    ))}
                </div>
                <div className="flex w-[15px] flex-col items-center bg-[#f0f0f0]">
                    <svg viewBox="0 0 15 16" className="h-4 w-[15px]">
                        <path d="M4 11l3.500-4L11 11" fill="none" stroke="#444" strokeWidth="1.500" />
                    </svg>
                    <div className="w-full grow-[322] bg-[#c6c6c6]" />
                    <div className="grow-[118]" />
                    <svg viewBox="0 0 15 16" className="h-4 w-[15px]">
                        <path d="M4 5l3.500 4L11 5" fill="none" stroke="#444" strokeWidth="1.500" />
                    </svg>
                </div>
            </div>
            <div className="flex h-[17px] shrink-0 items-center border-r border-b border-[#a8a8a8] bg-[#f0f0f0]">
                <div className="h-[15px] w-[180px] bg-[#c6c6c6]" />
                <svg viewBox="0 0 10 10" className="ml-4 h-[10px] w-[10px]">
                    <path d="M3 1l4 4-4 4" fill="none" stroke="#444" strokeWidth="1.500" />
                </svg>
            </div>
        </aside>
    );
}

function Toolbox() {
    const section = "grid grid-cols-2 justify-items-center border-b border-[#b4b4b4] pt-[5px] pb-[2px]";
    const cell = "flex h-[27px] items-center";
    return (
        <div className="w-[60px] shrink-0 border-r border-[#b8b8b8] bg-linear-to-r from-[#f8f8f8] from-[16px] to-[#f0f0f0] to-[16px] pr-[2px]">
            <div className="grid grid-cols-2 justify-items-center border-b border-[#b4b4b4]">
                {["load", "bc", "predef", "loadCase"].map((n) => (
                    <React.Fragment key={n}>
                        <div className="flex h-[33px] items-center"><Tool name={n} active={n === "bc"} /></div>
                        <div className="flex h-[33px] items-center"><Tool name="manager" /></div>
                    </React.Fragment>
                ))}
            </div>
            <div className={section}>
                {["partition", "splitBlock", "eraser"].map((n) => (
                    <div key={n} className={cell}><Tool name={n} /></div>
                ))}
            </div>
            <div className={section}>
                {["datum", "featCurve", "featSolid", "scissors"].map((n) => (
                    <div key={n} className={cell}><Tool name={n} /></div>
                ))}
            </div>
            <div className="grid grid-cols-2 justify-items-center pt-[5px]">
                <button className={cell} aria-label="datum point">
                    <svg viewBox="0 0 26 22" className="h-[22px] w-[26px]">
                        <text x="1" y="9" fontSize="9" fontWeight="700" fill="#222">(XYZ)</text>
                        <path d="M12 12v8M8 16h8" stroke="#2a7cd0" strokeWidth="2" />
                        <path d="M24 18v4h-4z" fill="#111" />
                    </svg>
                </button>
                {["axes", "datumPlane", "csys"].map((n) => (
                    <div key={n} className={cell}><Tool name={n} /></div>
                ))}
            </div>
        </div>
    );
}

// tail x, tail y, head x, head y
const yellowArrows = [
    [601, 247, 582, 253], [654, 227, 635, 233], [703, 208, 685, 214], [751, 190, 733, 196],
    [797, 173, 779, 179], [841, 156, 824, 162], [873, 176, 856, 182], [908, 198, 891, 204],
    [945, 221, 929, 227], [985, 245, 969, 252], [1022, 324, 1008, 330], [1017, 372, 1003, 378],
    [1011, 418, 998, 423], [1007, 459, 993, 464], [610, 295, 592, 302], [619, 341, 601, 348],
    [628, 384, 610, 391], [636, 424, 618, 431], [644, 461, 626, 468], [668, 490, 650, 498],
    [694, 520, 676, 528], [722, 553, 704, 561], [752, 588, 734, 597],
];

// heads whose tails run along an edge of the front face
const edgeHeads = [
    [1012, 279], [964, 302], [914, 326], [860, 352], [804, 379],
    [988, 503], [948, 528], [905, 553], [861, 579], [815, 607],
];

const orangeArrows = [
    [628, 272, 611, 279], [657, 300, 639, 307], [688, 331, 672, 338], [723, 364, 707, 371],
    [761, 400, 745, 407], [766, 453, 750, 461], [771, 502, 755, 510], [775, 547, 759, 554],
    [779, 588, 763, 597],
];

function Arrow({ p, color, dash }: { p: number[]; color: string; dash?: string }) {
    const [tx, ty, hx, hy] = p;
    return (
        <g>
            <path d={`M${tx} ${ty}L${hx} ${hy}`} stroke={color} strokeDasharray={dash} opacity="0.8" />
            <path d={`M${hx - 5} ${hy + 1}l6-5 4 7-4 1h-4z`} fill={color} />
        </g>
    );
}

function Viewport() {
    return (
        <div className="min-w-0 flex-1 bg-linear-to-b from-[#17243f] via-[#28374f] via-50% to-[#9bacc8]">
            <svg viewBox="294 136 986 489" className="h-full w-full" preserveAspectRatio="xMidYMid meet">
                <defs>
                    <pattern id="stipple" width="2" height="2" patternUnits="userSpaceOnUse">
                        <path d="M0 0h1v1H0zM1 1h1v1H1z" fill="#8c4068" opacity="0.4" />
                    </pattern>
                </defs>
                <path d="M601 247 841 156l187 116-266 127z" fill="#1880ea" />
                <path d="M762 399l266-127-23 223-222 129z" fill="#0e4f8e" />
                <path d="M601 247l161 152 21 225-139-163z" fill="#684676" />
                <path d="M601 247l161 152 21 225-139-163z" fill="url(#stipple)" />
                <path d="M601 247 841 156l187 116" fill="none" stroke="#0b1630" />
                {yellowArrows.map((p) => <Arrow key={p.join()} p={p} color="#f6f41c" />)}
                {edgeHeads.map(([x, y]) => (
                    <path key={x} d={`M${x - 4} ${y + 3}l3-8 3 1 3 7-3 2h-4z`} fill="#f6e41c" />
                ))}
                {orangeArrows.map((p) => <Arrow key={p.join()} p={p} color="#d48a3c" dash="2 1" />)}
                <path d="M762 399 601 247l43 214 139 163" fill="none" stroke="#d8141e" strokeWidth="2" />
                <path d="M601 247l43 214" stroke="#d8141e" strokeWidth="3" />
                <path d="M762 399l266-127-23 223-222 129z" fill="none" stroke="#db7c28" strokeWidth="3" />
                <circle cx="841" cy="156" r="2" fill="#f6f45c" />
                <circle cx="1028" cy="272" r="2" fill="#f0a43c" />
                <circle cx="601" cy="247" r="2" fill="#f08c2c" />
                <g fill="none" stroke="#e08a34">
                    <path d="M704 492l-4-24M704 492l29-15" strokeDasharray="3 1" />
                    <path d="M704 492l19 21" />
                    <path d="M700 459h6l-6 7h6M737 470l3 4 4-5M740 474l-2 5M724 507l6 8M730 507l-6 8" strokeDasharray="2 1" />
                </g>

                <g strokeWidth="2">
                    <path d="M376 581v-14" stroke="#1c20c8" strokeWidth="3" />
                    <path d="M372 568l4-9 4 9z" fill="#1c20e0" />
                    <path d="M377 581l14-7" stroke="#188c28" strokeWidth="3" />
                    <path d="M389 569l11 1-8 8z" fill="#18a030" />
                    <path d="M377 581l8 7" stroke="#b01414" strokeWidth="3" />
                    <path d="M382 589l7-5 4 11z" fill="#d81818" />
                </g>
                <g fill="#f0f4fa" fontSize="14">
                    <text x="370" y="552">Z</text>
                    <text x="406" y="568">Y</text>
                    <text x="395" y="606">X</text>
                </g>

                <g stroke="#d8ccec" strokeWidth="2">
                    <path d="M1203 215c12-2 26 17 28 35 1 9-1 14-3 16l-23-21z" fill="#04046c" />
                    <path d="M1240 199c9-5 20-4 26 1 5 4 6 8 7 13 9 11 8 26-9 34l-22-19z" fill="#10505c" />
                    <path d="M1220 238l60-27" />
                    <path d="M1277 207h4v7h-4z" fill="#d8ccec" />
                </g>
                <path d="M1210 235h10v10h-10z" fill="#d80008" />
                <g fill="#e8e44c" fontSize="12">
                    <text x="1235" y="194">Z</text>
                    <text x="1264" y="256">X</text>
                </g>
            </svg>
        </div>
    );
}

function PromptArea() {
    const [createSet, setCreateSet] = useState(true);
    const [setName, setSetName] = useState("Set-2");

    return (
        <div className="flex h-8 shrink-0 items-center overflow-hidden border-b border-[#b8b8b8] bg-linear-to-b from-[#fbfbfb] to-[#efefef] pl-1">
            <button aria-label="Previous" className="flex h-[22px] w-[19px] items-center justify-center border border-[#b4b4b4] bg-[#ececec]">
                <svg viewBox="0 0 16 12" className="h-3 w-[15px]">
                    <path d="M1 6l6-5v3h8v4H7v3z" fill="#000" />
                </svg>
            </button>
            <button aria-label="Cancel" className="ml-[3px] flex h-[22px] w-[19px] items-center justify-center border border-[#b4b4b4] bg-[#ececec]">
                <svg viewBox="0 0 12 12" className="h-3 w-3">
                    <path d="M1 1l10 10M10 0 2 12" stroke="#e0141c" strokeWidth="2" />
                </svg>
            </button>
            <span className="ml-[6px] whitespace-nowrap">Select regions for the boundary condition</span>
            <span className="ml-2">(</span>
            <label className="relative ml-[6px] flex items-center gap-1 whitespace-nowrap">
                <input
                    type="checkbox"
                    checked={createSet}
                    onChange={(e) => setCreateSet(e.target.checked)}
                    className="h-[13px] w-[13px] appearance-none border border-[#333] bg-white"
                />
                {createSet && (
                    <svg viewBox="0 0 13 13" className="pointer-events-none absolute left-0 h-[13px] w-[13px]">
                        <path d="M3 6l3 3 4-6" fill="none" stroke="#222" strokeWidth="1.500" />
                    </svg>
                )}
                Create set:
            </label>
            <input
                aria-label="Set name"
                value={setName}
                onChange={(e) => setSetName(e.target.value)}
                className="ml-[6px] h-[23px] w-[67px] border border-[#9c9c9c] bg-[#fbfbfb] pl-[3px] outline-none"
            />
            <span className="ml-[6px]">)</span>
            <button className="ml-2 h-[21px] w-[34px] border-2 border-[#1c6cb0] bg-[#e4e8ec]">Done</button>
            <button className="ml-auto h-[21px] w-9 shrink-0 border border-[#acacac] bg-[#e6e6e6]">Sets...</button>
            <svg viewBox="0 0 66 26" className="ml-6 h-[26px] w-[66px] shrink-0">
                <g fill="none" stroke="#12988c" strokeWidth="2">
                    <path d="M10 4c6-3 8 1 1 6M7 12h3c3 1 0 8-8 12l5-11M20 12c-5-1-6 3-2 5 2 2-1 5-5 4" />
                    <path d="M37 14c-6-1-9 0-8 2 1 1 6 1 5 4-1 2-5 2-8 1M42 13l-2 9M44 22l3-9 3 6 6-6-1 9M61 13l-2 7c0 2 4 2 8 1" />
                </g>
            </svg>
        </div>
    );
}

export default function App() {
    return (
        <div className="flex h-screen flex-col overflow-hidden bg-[#f8f8f8] font-['Lato','Open_Sans',sans-serif] text-[12px] leading-4 text-[#222] [font-variant-ligatures:none]">
            <header className="flex h-6 shrink-0 items-center">
                <h1 className="whitespace-nowrap">aqus/CAE 6.13-4 [Viewport: 1]</h1>
                <div className="mr-6 ml-auto flex items-center gap-[34px]">
                    <button aria-label="Minimize">
                        <svg viewBox="0 0 11 11" className="h-[11px] w-[11px]"><path d="M0 5.500h11" stroke="#222" /></svg>
                    </button>
                    <button aria-label="Restore">
                        <svg viewBox="0 0 11 11" className="h-[11px] w-[11px]">
                            <path d="M.500 2.500h8v8h-8zM3 2V.500h7.500V8H9" fill="none" stroke="#222" />
                        </svg>
                    </button>
                </div>
            </header>
            <nav className="flex h-[23px] shrink-0 items-center gap-[15px] bg-linear-to-r from-[#f8f8f8] from-[610px] to-[#efefef] to-[610px]">
                <button>ile</button>
                {menus.map(([a, m, b]) => (
                    <button key={a + m + b} className="whitespace-nowrap">
                        {a}<u className="underline-offset-2">{m}</u>{b}
                    </button>
                ))}
                <button aria-label="Context help">
                    <svg viewBox="0 0 16 14" className="h-[14px] w-4">
                        <path d="M2 1v10l2-2 2 4 2-1-2-4h3z" fill="#111" />
                        <path d="M9 4c0-3 5-3 5 0 0 2-3 2-3 4M11 9v2" fill="none" stroke="#111" strokeWidth="1.500" />
                    </svg>
                </button>
                <button aria-label="Minimize viewport" className="ml-auto flex h-[13px] w-[19px] items-end justify-center border border-[#dcdcdc] bg-white pb-[2px]">
                    <span className="h-[2px] w-[6px] bg-[#667]" />
                </button>
            </nav>
            <Toolbars />
            <div className="flex min-h-0 flex-1">
                <ModelTree />
                <main className="ml-[7px] flex min-w-0 flex-1 flex-col">
                    <div className="flex h-8 shrink-0 items-center gap-[14px] border-b border-[#d4d8e0] bg-[#f0f0f0] pl-[6px]">
                        <Combo label="Module:" value="Load" className="w-[106px]" />
                        <Combo label="Model:" value="Model-1" className="w-[88px]" dim />
                        <Combo label="Step:" value="statics" className="w-[88px]" />
                    </div>
                    <div className="flex min-h-0 flex-1">
                        <Toolbox />
                        <Viewport />
                    </div>
                    <PromptArea />
                </main>
            </div>
            <footer className="mt-[6px] ml-[3px] h-[57px] shrink-0 border-t border-l border-[#a0a0a0] pt-[3px] pl-1 font-['Liberation_Mono',monospace] text-[13px] leading-[13px] whitespace-pre text-[#111]">
                {messages.map((line) => <p key={line}>{line}</p>)}
            </footer>
        </div>
    );
}
